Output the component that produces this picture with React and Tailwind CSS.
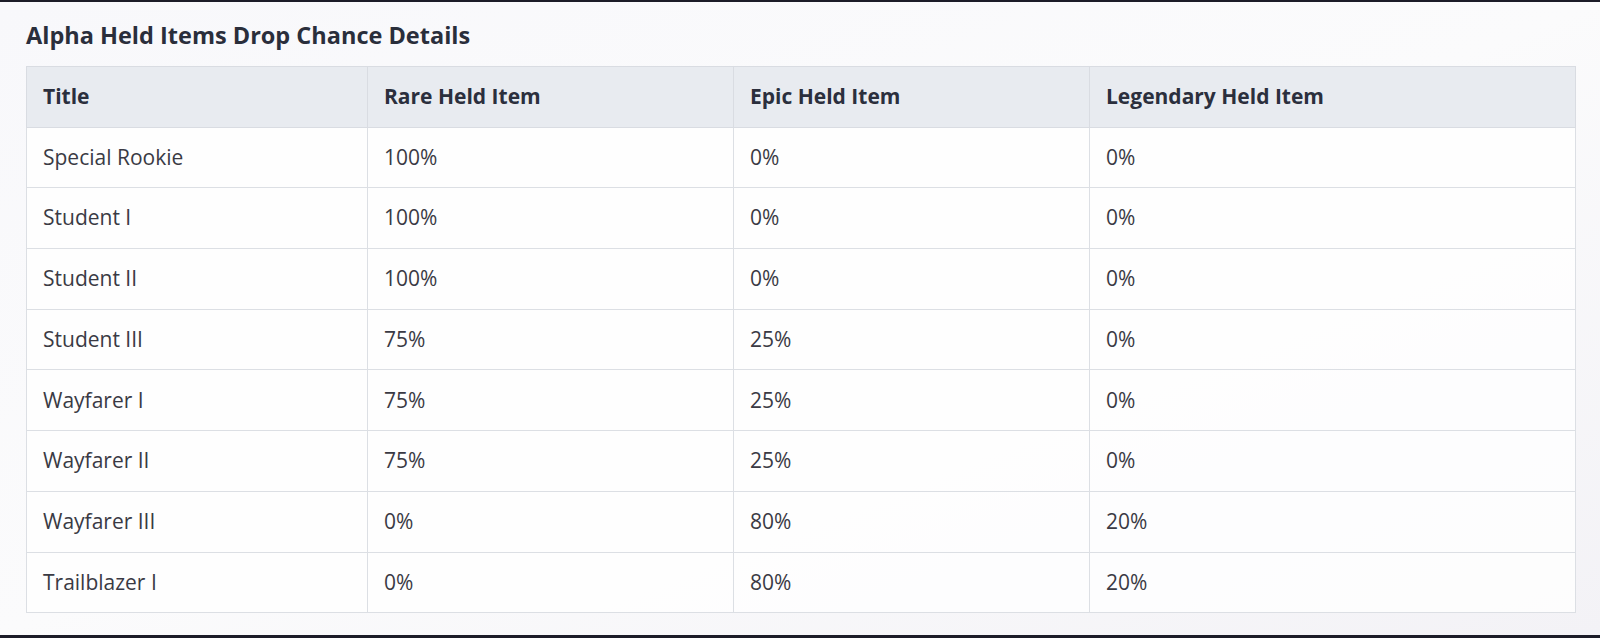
import React from "react";

const rows = [
  ["Special Rookie", "100%", "0%", "0%"],
  ["Student I", "100%", "0%", "0%"],
  ["Student II", "100%", "0%", "0%"],
  ["Student III", "75%", "25%", "0%"],
  ["Wayfarer I", "75%", "25%", "0%"],
  ["Wayfarer II", "75%", "25%", "0%"],
  ["Wayfarer III", "0%", "80%", "20%"],
  ["Trailblazer I", "0%", "80%", "20%"],
];

const headers = ["Title", "Rare Held Item", "Epic Held Item", "Legendary Held Item"];

export default function App() {
  return (
    <div
      className="w-[1600px] h-[638px] flex flex-col bg-[#f6f6f9] overflow-hidden"
      style={{ fontFamily: '"Open Sans", "Noto Sans", sans-serif' }}
    >
      <div className="h-[2px] bg-[#1c1c28]" />
      <div className="flex-1 flex flex-col pl-[26px] pt-[18px] bg-gradient-to-br from-[#f8f8fb] via-[#fbfbfc] to-[#f3f2f6]">
        <h2 className="text-[23.5px] leading-[30px] font-bold text-[#2a2e3b]">
          Alpha Held Items Drop Chance Details
        </h2>
        <table className="mt-[16px] table-fixed border-collapse w-[1549px]">
          <colgroup>
            <col className="w-[341px]" />
            <col className="w-[366px]" />
            <col className="w-[356px]" />
            <col className="w-[486px]" />
          </colgroup>
          <thead>
            <tr className="bg-[#e8ebf0]">
              {headers.map((h) => (
                <th
                  key={h}
                  className="h-[60.7px] border border-[#d9dce2] px-[16px] text-left text-[21px] font-bold text-[#2b2f3d]"
                >
                  {h}
                </th>
              ))}
            </tr>
          </thead>
          <tbody>
            {rows.map((r) => (
              <tr key={r[0]} className="bg-white/80">
                {r.map((c, i) => (
                  <td
                    key={i}
                    className="h-[60.7px] border border-[#dcdfe4] px-[16px] text-[21px] text-[#3a3a44]"
                  >
                    {c}
                  </td>
                ))}
              </tr>
            ))}
          </tbody>
        </table>
        <div className="flex-1" />
      </div>
      <div className="h-[3px] bg-[#1c1c28]" />
    </div>
  );
}
